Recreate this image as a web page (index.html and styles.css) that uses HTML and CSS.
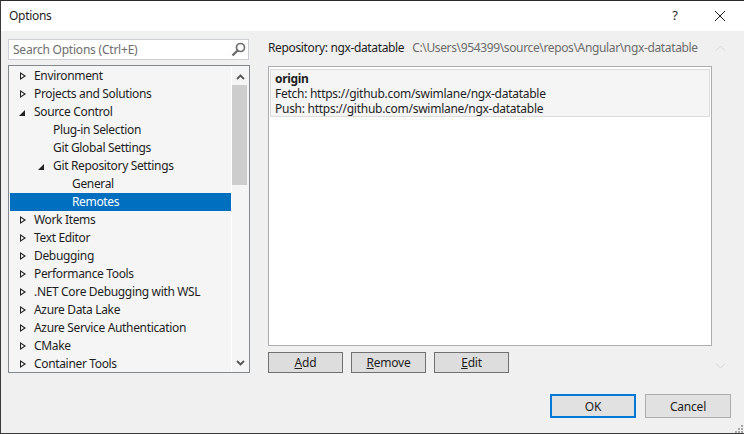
FILE: index.html
```html
<!DOCTYPE html>
<html lang="en">
<head>
<meta charset="utf-8">
<title>Options</title>
<link rel="stylesheet" href="styles.css">
</head>
<body>
<div class="window">
  <header class="titlebar">
    <span class="title">Options</span>
    <span class="help">?</span>
    <svg class="close" width="12" height="12" viewBox="0 0 12 12"><path d="M1 1l10 10M11 1L1 11" stroke="#1a1a1a" stroke-width="1" fill="none"/></svg>
  </header>
  <main class="content">
    <section class="left">
      <div class="search">
        <span class="search-text">Search Options (Ctrl+E)</span>
        <svg width="15" height="15" viewBox="0 0 15 15"><circle cx="9.5" cy="5.5" r="4" fill="none" stroke="#6d6d6d" stroke-width="1.7"/><path d="M6.5 8.5L1.5 13.5" stroke="#6d6d6d" stroke-width="2.4"/></svg>
      </div>
      <div class="tree">
        <ul class="rows">
          <li class="row"><i class="tw closed"></i>Environment</li>
          <li class="row"><i class="tw closed"></i>Projects and Solutions</li>
          <li class="row"><i class="tw open"></i>Source Control</li>
          <li class="row l1"><i class="tw"></i>Plug-in Selection</li>
          <li class="row l1"><i class="tw"></i>Git Global Settings</li>
          <li class="row l1"><i class="tw open"></i>Git Repository Settings</li>
          <li class="row l2"><i class="tw"></i>General</li>
          <li class="row l2 selected"><i class="tw"></i>Remotes</li>
          <li class="row"><i class="tw closed"></i>Work Items</li>
          <li class="row"><i class="tw closed"></i>Text Editor</li>
          <li class="row"><i class="tw closed"></i>Debugging</li>
          <li class="row"><i class="tw closed"></i>Performance Tools</li>
          <li class="row"><i class="tw closed"></i>.NET Core Debugging with WSL</li>
          <li class="row"><i class="tw closed"></i>Azure Data Lake</li>
          <li class="row"><i class="tw closed"></i>Azure Service Authentication</li>
          <li class="row"><i class="tw closed"></i>CMake</li>
          <li class="row"><i class="tw closed"></i>Container Tools</li>
        </ul>
        <div class="scrollbar">
          <svg class="arrow" width="9" height="6" viewBox="0 0 9 6"><path d="M1 5l3.5-3.5L8 5" fill="none" stroke="#555" stroke-width="1.8"/></svg>
          <div class="track"><div class="thumb"></div></div>
          <svg class="arrow" width="9" height="6" viewBox="0 0 9 6"><path d="M1 1l3.5 3.5L8 1" fill="none" stroke="#555" stroke-width="1.8"/></svg>
        </div>
      </div>
    </section>
    <section class="right">
      <div class="repo">
        <span>Repository: ngx-datatable</span>
        <span class="path">C:\Users\954399\source\repos\Angular\ngx-datatable</span>
      </div>
      <div class="remotes">
        <div class="remote">
          <div class="name">origin</div>
          <div>Fetch: https://github.com/swimlane/ngx-datatable</div>
          <div>Push: https://github.com/swimlane/ngx-datatable</div>
        </div>
      </div>
      <div class="actions">
        <button class="btn"><u>A</u>dd</button>
        <button class="btn"><u>R</u>emove</button>
        <button class="btn"><u>E</u>dit</button>
      </div>
    </section>
    <aside class="outer-scroll">
      <svg width="11" height="6" viewBox="0 0 11 6"><path d="M1 5.5l4.5-4.5L10 5.5" fill="none" stroke="#d4d4d4" stroke-width="1"/></svg>
      <svg width="11" height="6" viewBox="0 0 11 6"><path d="M1 .5L5.5 5 10 .5" fill="none" stroke="#d4d4d4" stroke-width="1"/></svg>
    </aside>
  </main>
  <footer class="footer">
    <button class="dlg default">OK</button>
    <button class="dlg">Cancel</button>
    <svg class="grip" width="9" height="9" viewBox="0 0 9 9" fill="#a8a8a8"><rect x="7" y="1" width="2" height="2"/><rect x="4" y="4" width="2" height="2"/><rect x="7" y="4" width="2" height="2"/><rect x="1" y="7" width="2" height="2"/><rect x="4" y="7" width="2" height="2"/><rect x="7" y="7" width="2" height="2"/></svg>
  </footer>
</div>
</body>
</html>
```
FILE: styles.css
```css
* { box-sizing: border-box; }
html, body { margin: 0; padding: 0; }
body { width: 744px; height: 434px; overflow: hidden; font-family: "Noto Sans", "Open Sans", "Liberation Sans", sans-serif; font-size: 12px; color: #1e1e1e; }
.window { width: 744px; height: 434px; display: flex; flex-direction: column; background: #f0f0f0; border-top: 1px solid #2a2a2a; border-left: 1px solid #3a3a3a; border-bottom: 1px solid #3a3a3a; }
.titlebar { height: 30px; flex: none; background: #fff; display: flex; align-items: center; padding-left: 8px; }
.title { flex: 1; margin-bottom: 2px; letter-spacing: -.3px; }
.help { width: 12px; text-align: center; margin-right: 33px; margin-bottom: 3px; font-size: 13px; }
.close { margin-right: 18px; }
.content { flex: none; height: 343px; display: flex; padding: 8px 0 0 7px; }
.left { width: 242px; flex: none; display: flex; flex-direction: column; gap: 5px; }
.search { height: 21px; width: 241px; flex: none; background: #fff; border: 1px solid #ccced8; display: flex; align-items: center; justify-content: space-between; padding: 0 2px 0 4px; color: #6d6d6d; letter-spacing: -.22px; }
.tree { width: 242px; height: 308px; flex: none; border: 1px solid #828790; background: #f5f5f5; display: flex; overflow: hidden; padding: 1px 0 0 1px; }
.rows { list-style: none; margin: 0; padding: 0; width: 221px; flex: none; height: 305px; overflow: hidden; }
.row { height: 18px; line-height: 18px; display: flex; align-items: center; padding-left: 6px; white-space: nowrap; letter-spacing: -.34px; color: #1e1e1e; }
.l1 { padding-left: 25px; }
.l2 { padding-left: 44px; }
.selected { background: #006fbf; color: #fff; }
.tw { width: 18px; height: 18px; flex: none; position: relative; display: block; }
.tw.closed::before { content: ""; position: absolute; left: 4px; top: 5px; border-left: 6px solid #222; border-top: 4.5px solid transparent; border-bottom: 4.5px solid transparent; }
.tw.closed::after { content: ""; position: absolute; left: 5px; top: 7px; border-left: 3px solid #f5f5f5; border-top: 2.5px solid transparent; border-bottom: 2.5px solid transparent; }
.tw.open::before { content: ""; position: absolute; left: 3px; top: 7px; border-bottom: 6px solid #222; border-left: 6px solid transparent; }
.scrollbar { width: 18px; flex: none; display: flex; flex-direction: column; align-items: center; justify-content: space-between; background: #f5f5f5; border-left: 1px solid #fff; padding: 7px 0 6px; height: 305px; }
.track { flex: 1; width: 100%; margin-top: 5px; }
.thumb { width: 15px; height: 100px; background: #cdcdcd; }
.arrow { flex: none; }
.right { width: 444px; flex: none; margin-left: 18px; display: flex; flex-direction: column; }
.repo { height: 19px; margin-bottom: 9px; display: flex; align-items: center; gap: 8px; white-space: nowrap; letter-spacing: -.36px; margin-top: -1px; }
.path { color: #6d6d6d; letter-spacing: -.36px; }
.remotes { height: 280px; flex: none; background: #fff; border: 1px solid #abadb3; padding: 2px 1px; }
.remote { background: #f5f5f5; border: 1px solid #dcdcdc; height: 48px; padding: 1px 4px 0; line-height: 15px; letter-spacing: -.27px; }
.name { font-weight: 700; letter-spacing: -.3px; }
.actions { display: flex; gap: 8px; margin-top: 6px; }
.btn { width: 75px; height: 21px; padding: 0; background: #ddd; border: 1px solid #707070; font: inherit; color: #1e1e1e; letter-spacing: -.2px; }
.outer-scroll { flex: none; width: 11px; margin-left: 3px; height: 330px; display: flex; flex-direction: column; justify-content: space-between; padding-top: 6px; }
.footer { flex: 1; display: flex; align-items: flex-start; justify-content: flex-end; gap: 9px; padding: 20px 13px 0 0; position: relative; }
.dlg { width: 86px; height: 24px; padding: 0; background: #e1e1e1; border: 1px solid #adadad; font: inherit; color: #1e1e1e; letter-spacing: -.2px; }
.default { border: 2px solid #0078d7; }
.grip { position: absolute; right: 1px; bottom: 0; }
```
